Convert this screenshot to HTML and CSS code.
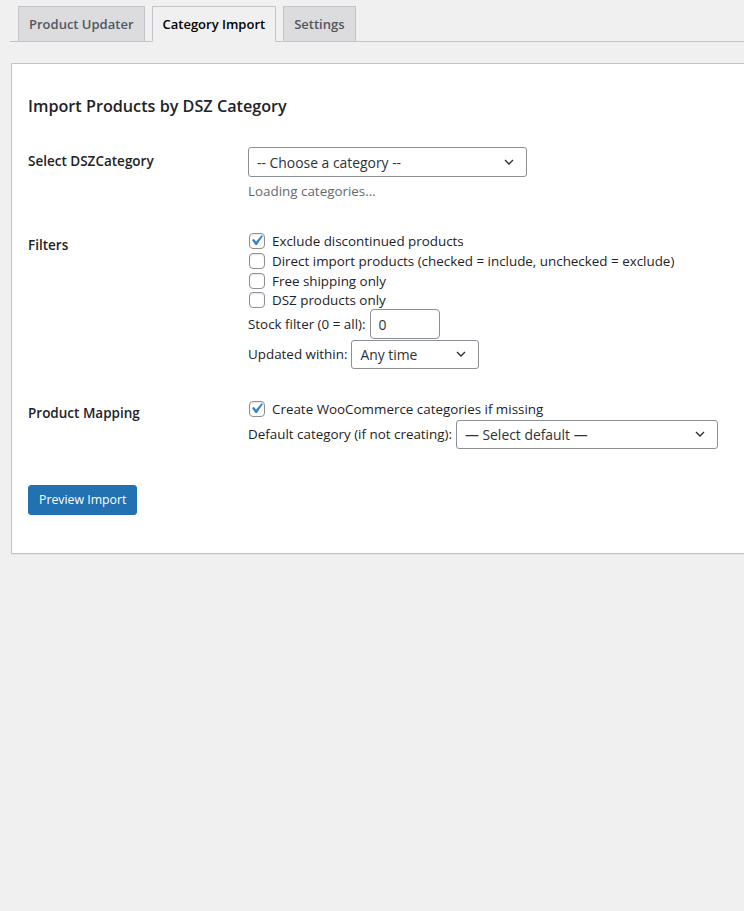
FILE: index.html
```html
<!DOCTYPE html>
<html lang="en">
<head>
<meta charset="utf-8">
<title>Category Import</title>
<link rel="stylesheet" href="styles.css">
</head>
<body>
<div class="wrap">
  <nav class="tabs">
    <a class="tab">Product Updater</a>
    <a class="tab active">Category Import</a>
    <a class="tab">Settings</a>
  </nav>

  <div class="card">
    <h2 class="title">Import Products by DSZ Category</h2>

    <div class="row row-first">
      <div class="label">Select DSZCategory</div>
      <div class="field">
        <div class="select select-cat"><span class="select-text">-- Choose a category --</span><svg class="chev" viewBox="0 0 10 6" width="10" height="6"><path d="M1 1l4 4 4-4" fill="none" stroke="#2c3338" stroke-width="1.4"/></svg></div>
        <p class="description">Loading categories...</p>
      </div>
    </div>

    <div class="row">
      <div class="label">Filters</div>
      <div class="field">
        <div class="check-line"><span class="cb checked"><svg viewBox="0 0 20 20" width="21" height="21"><path d="M14.83 4.89l1.34.94-5.81 8.38H9.02L5.78 9.67l1.34-1.25 2.57 2.57z" fill="#3582c4"/></svg></span><span>Exclude discontinued products</span></div>
        <div class="check-line"><span class="cb"></span><span>Direct import products (checked = include, unchecked = exclude)</span></div>
        <div class="check-line short"><span class="cb"></span><span>Free shipping only</span></div>
        <div class="check-line short"><span class="cb"></span><span>DSZ products only</span></div>
        <div class="inline-line"><span>Stock filter (0 = all):</span><input class="input-num" type="text" value="0"></div>
        <div class="inline-line"><span>Updated within:</span><div class="select select-time"><span class="select-text">Any time</span><svg class="chev" viewBox="0 0 10 6" width="10" height="6"><path d="M1 1l4 4 4-4" fill="none" stroke="#2c3338" stroke-width="1.4"/></svg></div></div>
      </div>
    </div>

    <div class="row">
      <div class="label">Product Mapping</div>
      <div class="field">
        <div class="check-line"><span class="cb checked"><svg viewBox="0 0 20 20" width="21" height="21"><path d="M14.83 4.89l1.34.94-5.81 8.38H9.02L5.78 9.67l1.34-1.25 2.57 2.57z" fill="#3582c4"/></svg></span><span>Create WooCommerce categories if missing</span></div>
        <div class="inline-line"><span>Default category (if not creating):</span><div class="select select-default"><span class="select-text">— Select default —</span><svg class="chev" viewBox="0 0 10 6" width="10" height="6"><path d="M1 1l4 4 4-4" fill="none" stroke="#2c3338" stroke-width="1.4"/></svg></div></div>
      </div>
    </div>

    <div class="submit">
      <button class="button-primary" type="button">Preview Import</button>
    </div>
  </div>
</div>
</body>
</html>
```

FILE: styles.css
```css
* { box-sizing: border-box; }

html, body {
  margin: 0;
  padding: 0;
  background: #f0f0f1;
}

body {
  font-family: "Open Sans", "Noto Sans", sans-serif;
  font-size: 13.4px;
  color: #1d2327;
  height: 911px;
  overflow: hidden;
}

.wrap {
  padding: 6px 0 0 10px;
}

.tabs {
  display: flex;
  gap: 7px;
  padding-left: 8px;
  border-bottom: 1px solid #c3c4c7;
  height: 36px;
}

.tab {
  display: block;
  height: 36px;
  padding: 5px 10px;
  line-height: 24px;
  font-size: 13px;
  font-weight: 600;
  color: #50575e;
  background: #dcdcde;
  border: 1px solid #c3c4c7;
  cursor: pointer;
}

.tab.active {
  background: #f0f0f1;
  color: #000;
  border-bottom-color: #f0f0f1;
}

.card {
  margin-top: 21px;
  margin-left: 1px;
  width: 780px;
  background: #fff;
  border: 1px solid #c3c4c7;
  box-shadow: 0 1px 1px rgba(0, 0, 0, 0.04);
  padding: 30px 16px 38px;
}

.title {
  margin: 0;
  font-size: 16.2px;
  line-height: 24px;
  font-weight: 600;
  color: #1d2327;
}

.row {
  display: flex;
  padding: 15px 0;
}

.row-first {
  margin-top: 14px;
  padding-bottom: 16px;
}

.label {
  width: 220px;
  flex-shrink: 0;
  padding-top: 5px;
  line-height: 18px;
  font-weight: 600;
  font-size: 13.5px;
}

.field {
  display: flex;
  flex-direction: column;
  align-items: flex-start;
}

.select {
  display: flex;
  align-items: center;
  height: 30px;
  border: 1px solid #8c8f94;
  border-radius: 3px;
  background: #fff;
  padding: 0 12px 0 8px;
  color: #2c3338;
  font-size: 13.9px;
}

.select-text {
  flex: 1;
  white-space: nowrap;
}

.chev {
  flex-shrink: 0;
}

.select-cat { width: 279px; }
.select-time { width: 128px; height: 29px; }
.select-default { width: 262px; height: 29px; }

.description {
  margin: 5px 0 0;
  line-height: 18px;
  color: #646970;
}

.check-line {
  display: flex;
  align-items: center;
  height: 20px;
  white-space: nowrap;
}

.check-line.short {
  height: 19px;
}

.cb {
  display: inline-flex;
  width: 16px;
  height: 16px;
  flex-shrink: 0;
  margin: 0 7px 0 1px;
  border: 1px solid #8c8f94;
  border-radius: 4px;
  background: #fff;
  box-shadow: inset 0 1px 2px rgba(0, 0, 0, 0.1);
}

.cb svg {
  flex-shrink: 0;
  margin: -4px 0 0 -4px;
}

.inline-line {
  display: flex;
  align-items: center;
  gap: 4px;
  height: 30px;
  white-space: nowrap;
}

.input-num {
  width: 70px;
  height: 30px;
  border: 1px solid #8c8f94;
  border-radius: 4px;
  padding: 0 8px;
  font: inherit;
  font-size: 13.9px;
  color: #2c3338;
  background: #fff;
}

.submit {
  margin-top: 21px;
}

.button-primary {
  display: block;
  height: 30px;
  padding: 0 10px;
  font-family: inherit;
  font-size: 12.3px;
  line-height: 28px;
  color: #fff;
  background: #2271b1;
  border: 1px solid #2271b1;
  border-radius: 3px;
  cursor: pointer;
}
```
